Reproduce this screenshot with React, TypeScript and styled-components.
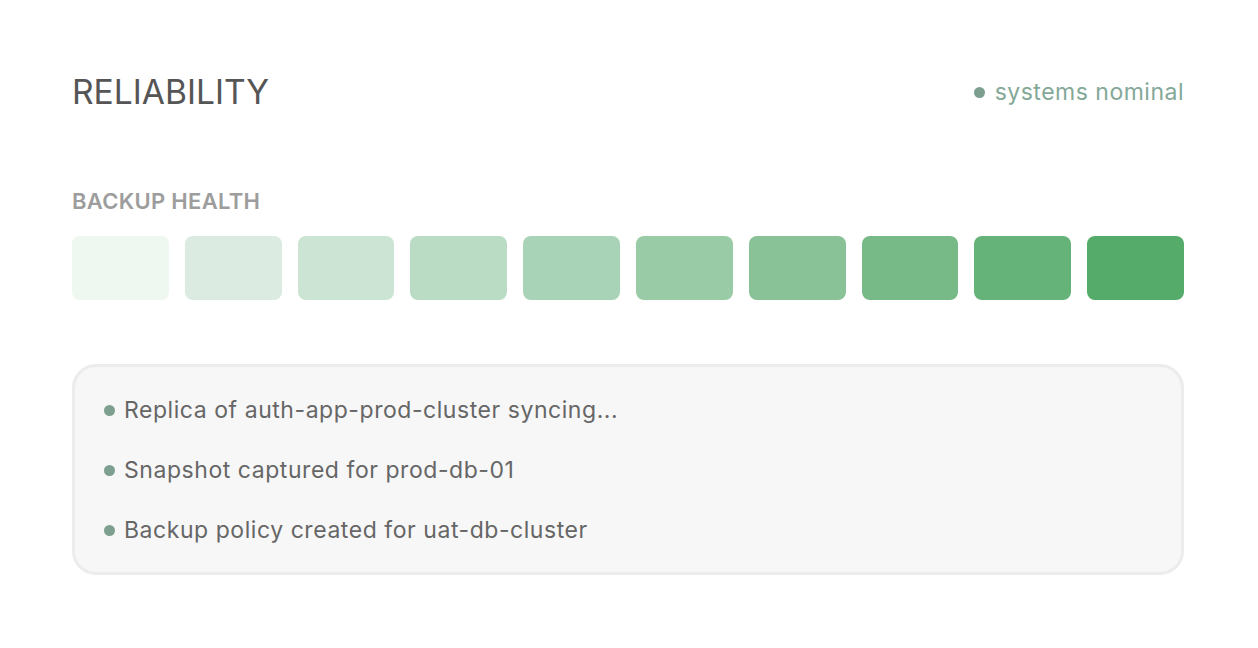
import React from 'react';
import styled, { createGlobalStyle } from 'styled-components';

const GlobalStyle = createGlobalStyle`
  html, body {
    margin: 0;
    padding: 0;
    background: #ffffff;
  }
  body {
    font-family: Inter, "Noto Sans", "Liberation Sans", sans-serif;
  }
`;

const Page = styled.main`
  padding: 72px 74px 0 72px;
`;

const Header = styled.header`
  display: flex;
  align-items: center;
  justify-content: space-between;
`;

const Title = styled.h1`
  margin: 0;
  font-size: 33.6px;
  line-height: 40px;
  font-weight: 400;
  color: #555555;
`;

const Status = styled.div`
  display: flex;
  align-items: center;
  gap: 10px;
  font-size: 23px;
  line-height: 28px;
  letter-spacing: 0.5px;
  color: #84a898;
`;

const Dot = styled.span`
  width: 11px;
  height: 11px;
  border-radius: 50%;
  background: #7d9f90;
  flex-shrink: 0;
`;

const SectionLabel = styled.h2`
  margin: 77px 0 23px;
  font-size: 22px;
  line-height: 24px;
  font-weight: 600;
  letter-spacing: 0.3px;
  color: #9d9d9d;
`;

const Grid = styled.div`
  display: grid;
  grid-template-columns: repeat(10, 1fr);
  gap: 16px;
`;

const Cell = styled.div<{ $color: string }>`
  height: 64px;
  border-radius: 8px;
  background: ${(p) => p.$color};
`;

const LogBox = styled.ul`
  list-style: none;
  margin: 64px 0 0;
  padding: 13px 29px 12px;
  border: 3px solid #ececec;
  border-radius: 24px;
  background: #f7f7f7;
`;

const LogItem = styled.li`
  display: flex;
  align-items: center;
  gap: 9px;
  height: 60px;
  font-size: 23px;
  letter-spacing: 0.55px;
  color: #666666;
`;

const shades = [
  '#eef7f0',
  '#dbebe1',
  '#cbe4d3',
  '#badbc4',
  '#a9d3b6',
  '#99cba6',
  '#88c296',
  '#77ba88',
  '#66b37a',
  '#55ab69',
];

const logs = [
  'Replica of auth-app-prod-cluster syncing...',
  'Snapshot captured for prod-db-01',
  'Backup policy created for uat-db-cluster',
];

export default function App() {
  return (
    <>
      <GlobalStyle />
      <Page>
        <Header>
          <Title>RELIABILITY</Title>
          <Status>
            <Dot />
            systems nominal
          </Status>
        </Header>
        <SectionLabel>BACKUP HEALTH</SectionLabel>
        <Grid>
          {shades.map((c, i) => (
            <Cell key={i} $color={c} />
          ))}
        </Grid>
        <LogBox>
          {logs.map((l) => (
            <LogItem key={l}>
              <Dot />
              {l}
            </LogItem>
          ))}
        </LogBox>
      </Page>
    </>
  );
}
